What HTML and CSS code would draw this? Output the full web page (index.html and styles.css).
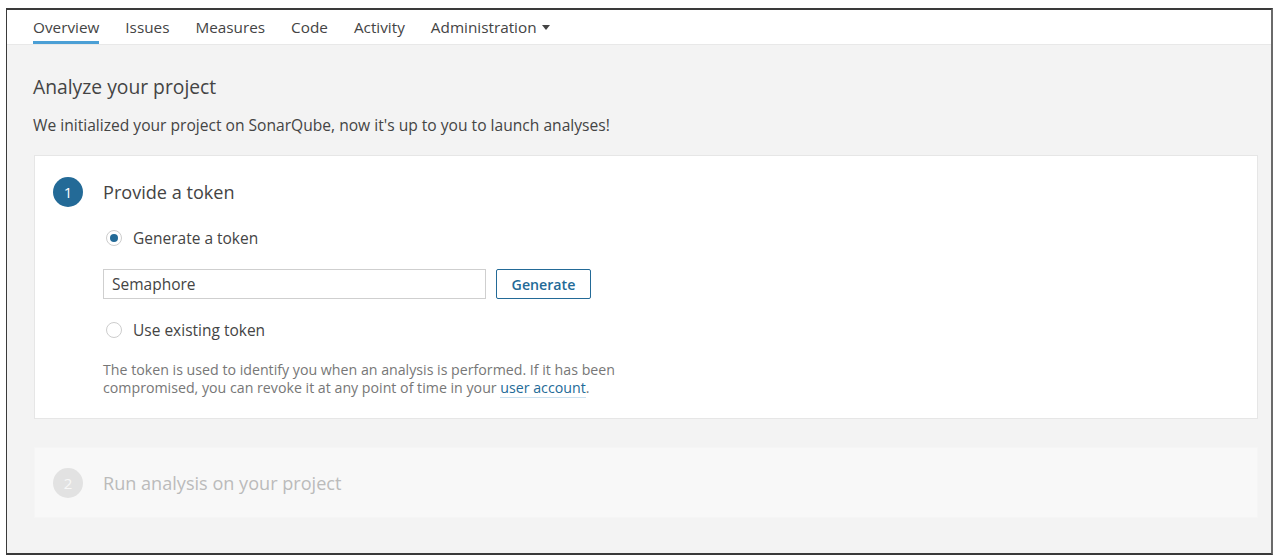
FILE: index.html
```html
<!DOCTYPE html>
<html>
<head>
<meta charset="utf-8">
<link rel="stylesheet" href="styles.css">
</head>
<body>
<div class="frame">
  <nav class="nav">
    <a class="nav-item active">Overview</a>
    <a class="nav-item">Issues</a>
    <a class="nav-item">Measures</a>
    <a class="nav-item">Code</a>
    <a class="nav-item">Activity</a>
    <a class="nav-item">Administration <span class="caret"></span></a>
  </nav>
  <main class="main">
    <h1 class="title">Analyze your project</h1>
    <p class="subtitle">We initialized your project on SonarQube, now it's up to you to launch analyses!</p>

    <section class="card">
      <div class="step-head">
        <span class="step-num">1</span>
        <h2 class="step-title">Provide a token</h2>
      </div>
      <div class="step-body">
        <label class="radio-row"><span class="radio checked"></span>Generate a token</label>
        <div class="token-row">
          <div class="input">Semaphore</div>
          <button class="btn">Generate</button>
        </div>
        <label class="radio-row"><span class="radio"></span>Use existing token</label>
        <p class="note">The token is used to identify you when an analysis is performed. If it has been compromised, you can revoke it at any point of time in your <a class="link">user account</a>.</p>
      </div>
    </section>

    <section class="card disabled">
      <div class="step-head">
        <span class="step-num">2</span>
        <h2 class="step-title">Run analysis on your project</h2>
      </div>
    </section>
  </main>
</div>
</body>
</html>
```

FILE: styles.css
```css
html, body {
  margin: 0;
  padding: 0;
  background: #ffffff;
}
body {
  font-family: "Open Sans", "Noto Sans", sans-serif;
  color: #444;
}
.frame {
  margin: 8px 0 0 6px;
  width: 1264px;
  height: 543px;
  border: 1px solid #3a3a3a;
  border-top: 2px solid #3a3a3a;
  border-right: 2px solid #6a6a6a;
  border-bottom: 2px solid #3a3a3a;
  background: #f3f3f3;
  display: flex;
  flex-direction: column;
  overflow: hidden;
}
.nav {
  height: 35px;
  background: #fff;
  border-bottom: 1px solid #e8e8e8;
  display: flex;
  align-items: stretch;
  gap: 26px;
  padding-left: 26px;
  box-sizing: border-box;
  flex: none;
}
.nav-item {
  font-size: 15.3px;
  color: #444;
  display: flex;
  align-items: center;
  padding-top: 3px;
  border-bottom: 3px solid transparent;
  box-sizing: border-box;
}
.nav-item.active {
  border-bottom-color: #4b9fd5;
}
.caret {
  display: inline-block;
  width: 0;
  height: 0;
  border-left: 4px solid transparent;
  border-right: 4px solid transparent;
  border-top: 5px solid #444;
  margin-left: 5px;
  margin-top: 1px;
}
.main {
  padding: 0 13px 0 26px;
}
.title {
  margin: 30px 0 0;
  font-size: 19.3px;
  font-weight: 400;
  line-height: 24px;
  color: #444;
}
.subtitle {
  margin: 16px 0 0;
  font-size: 15.6px;
  line-height: 20px;
  color: #444;
}
.card {
  margin: 20px 0 0 1px;
  background: #fff;
  border: 1px solid #e6e6e6;
  padding: 21px 18px 21px 18px;
  box-sizing: border-box;
}
.card.disabled {
  margin-top: 28px;
  height: 71px;
  background: #f8f8f8;
  border-color: #f5f5f5;
  padding-top: 20px;
}
.step-head {
  display: flex;
  align-items: center;
  gap: 20px;
  height: 30px;
}
.step-num {
  width: 30px;
  height: 30px;
  border-radius: 50%;
  background: #236a97;
  color: #fff;
  font-size: 15px;
  display: flex;
  align-items: center;
  justify-content: center;
}
.step-title {
  margin: 0;
  font-size: 18.1px;
  font-weight: 400;
  color: #444;
}
.disabled .step-num {
  background: #e2e2e2;
  color: #f8f8f8;
}
.disabled .step-title {
  color: #bbb;
}
.step-body {
  padding-left: 50px;
  margin-top: 21px;
}
.radio-row {
  display: flex;
  align-items: center;
  font-size: 15.5px;
  color: #444;
  height: 20px;
}
.radio {
  width: 16px;
  height: 16px;
  border: 1px solid #cdcdcd;
  border-radius: 50%;
  box-sizing: border-box;
  margin: 0 11px 0 3px;
  position: relative;
  background: #fff;
}
.radio.checked::after {
  content: "";
  position: absolute;
  left: 3px;
  top: 3px;
  width: 8px;
  height: 8px;
  border-radius: 50%;
  background: #236a97;
}
.token-row {
  display: flex;
  gap: 10px;
  margin: 21px 0 21px;
}
.input {
  width: 383px;
  height: 30px;
  box-sizing: border-box;
  border: 1px solid #cfcfcf;
  padding: 0 8px;
  font-size: 15.5px;
  line-height: 28px;
  color: #444;
}
.btn {
  height: 30px;
  width: 95px;
  box-sizing: border-box;
  border: 1px solid #236a97;
  border-radius: 2px;
  background: #fff;
  color: #236a97;
  font-family: "Open Sans", "Noto Sans", sans-serif;
  font-size: 14.2px;
  font-weight: 600;
  padding: 0;
}
.note {
  margin: 21px 0 0;
  width: 530px;
  font-size: 14.2px;
  line-height: 18px;
  color: #777;
}
.link {
  color: #236a97;
  border-bottom: 1px solid #cce1ef;
}
```
